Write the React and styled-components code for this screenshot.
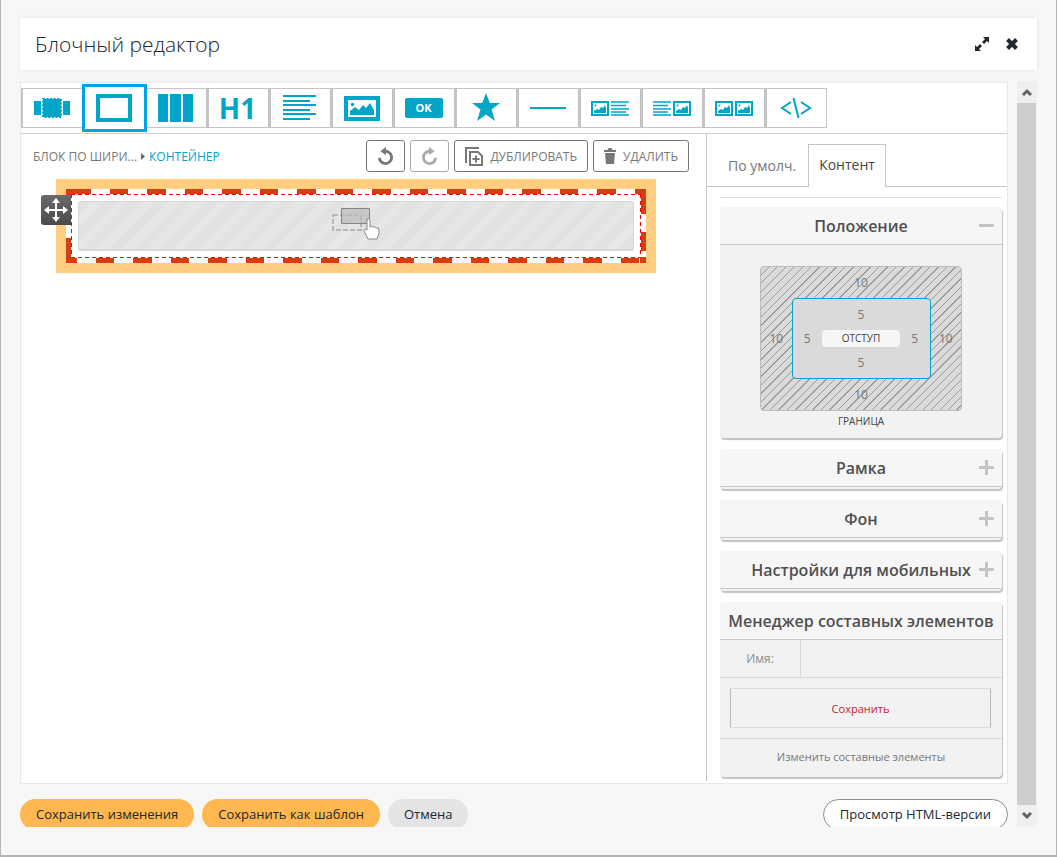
import React from "react";
import styled, { createGlobalStyle, css } from "styled-components";

const teal = "#00a5c8";

const GlobalStyle = createGlobalStyle`
  * {
    box-sizing: border-box;
  }
  body {
    margin: 0;
    font-family: "Open Sans", "Noto Sans", sans-serif;
    color: #23272e;
  }
  button,
  input {
    font-family: inherit;
    margin: 0;
    padding: 0;
  }
  button {
    cursor: pointer;
  }
  svg {
    display: block;
  }
`;

const Page = styled.div`
  display: flex;
  flex-direction: column;
  gap: 11px;
  min-height: 100vh;
  padding: 18px 19px 28px;
  background: #f7f7f7;
  border: solid #b4b4b4;
  border-width: 0 1px 2px;
`;

const Header = styled.header`
  display: flex;
  align-items: center;
  justify-content: space-between;
  height: 52px;
  padding: 0 17px 0 15px;
  background: #fff;
  box-shadow: 0 0 4px rgba(0, 0, 0, 0.08);
`;

const Title = styled.h1`
  margin: 0;
  font-size: 21px;
  font-weight: 300;
`;

const HeaderActions = styled.div`
  display: flex;
  gap: 14px;
`;

const IconButton = styled.button`
  display: flex;
  align-items: center;
  justify-content: center;
  width: 16px;
  height: 20px;
  color: #23272e;
  background: none;
  border: none;
`;

const Viewport = styled.div`
  display: flex;
  flex: 1;
  gap: 9px;
`;

const Content = styled.main`
  display: flex;
  flex: 1;
  flex-direction: column;
  min-width: 0;
`;

const ScrollBar = styled.div`
  display: flex;
  flex-direction: column;
  width: 20px;
  background: #efefef;
`;

const ScrollButton = styled.button`
  display: flex;
  align-items: center;
  justify-content: center;
  height: 22px;
  background: #efefef;
  border: none;
`;

const ScrollThumb = styled.div`
  flex: 1;
  margin-right: 1px;
  background: #cdcdcd;
`;

const Editor = styled.div`
  display: flex;
  flex: 1;
  flex-direction: column;
  background: #fff;
  border: 1px solid #e8e8e8;
  border-top: 2px solid #efefef;
`;

const Toolbar = styled.div`
  display: flex;
  padding: 5px 0;
  border-bottom: 1px solid #d0d0d0;
`;

const Tool = styled.button`
  position: relative;
  display: flex;
  align-items: center;
  justify-content: center;
  width: 62px;
  height: 40px;
  padding-right: 2px;
  color: ${teal};
  background: #fff;
  border: solid #c4c4c4;
  border-width: 1px 1px 1px 2px;
  ${(props) =>
    props.$selected &&
    css`
      z-index: 1;
      border-color: transparent;
      &::after {
        content: "";
        position: absolute;
        inset: -5px -3px;
        border: 3px solid #00a2e8;
      }
    `}
`;

const Heading = styled.span`
  font-size: 28px;
  font-weight: 700;
  line-height: 28px;
`;

const OkBadge = styled.span`
  width: 38px;
  border-radius: 2px;
  background: ${teal};
  color: #fff;
  font-size: 11px;
  font-weight: 700;
  line-height: 20px;
`;

const Workspace = styled.div`
  display: flex;
  flex: 1;
`;

const Canvas = styled.section`
  flex: 1;
  min-width: 0;
`;

const ActionBar = styled.div`
  display: flex;
  align-items: center;
  justify-content: space-between;
  padding: 6px 17px 7px 12px;
`;

const Breadcrumb = styled.nav`
  display: flex;
  align-items: center;
  gap: 4px;
  font-size: 12px;
  text-transform: uppercase;
`;

const Crumb = styled.a`
  color: ${(props) => (props.$current ? teal : "#777")};
  text-decoration: none;
`;

const Actions = styled.div`
  display: flex;
  gap: 5px;
`;

const Action = styled.button`
  display: flex;
  align-items: center;
  justify-content: center;
  gap: 7px;
  height: 32px;
  padding: 0 10px;
  color: #777;
  background: #fff;
  border: 1px solid #777;
  border-radius: 3px;
  font-size: 12px;
  text-transform: uppercase;
  &:disabled {
    color: #aaa;
    border-color: #aaa;
  }
`;

const Block = styled.div`
  position: relative;
  margin: 0 50px 0 35px;
  padding: 10px;
  background: #ffcd80;
`;

const MoveHandle = styled.button`
  position: absolute;
  top: 16px;
  left: -15px;
  display: flex;
  align-items: center;
  justify-content: center;
  width: 30px;
  height: 30px;
  background: linear-gradient(#6a6a6a, #4a4a4a);
  border: none;
  border-radius: 3px 0 0 3px;
`;

const dash = "#d13f12 0 19px, #fff 19px 38px, #d13f12 38px 56px, #fff 56px 75px";

const Band = styled.div`
  padding: 5px;
  background:
    linear-gradient(#d13f12, #d13f12) 0 0 / 6px 6px no-repeat,
    linear-gradient(#d13f12, #d13f12) 0 100% / 6px 25px no-repeat,
    linear-gradient(#d13f12, #d13f12) 100% 0 / 6px 25px no-repeat,
    linear-gradient(#d13f12, #d13f12) 100% 43px / 6px 19px no-repeat,
    linear-gradient(#d13f12, #d13f12) 100% 100% / 6px 6px no-repeat,
    linear-gradient(90deg, ${dash}) 6px 0 / 75px 6px repeat-x,
    linear-gradient(90deg, ${dash}) -8px 100% / 75px 6px repeat-x,
    #fff;
`;

const redDash = "#f00 0 4px, #fff 4px 7px";

const Outline = styled.div`
  padding: 7px;
  background:
    linear-gradient(90deg, ${redDash}) 0 0 / 7px 1px repeat-x,
    linear-gradient(90deg, ${redDash}) 0 100% / 7px 1px repeat-x,
    linear-gradient(${redDash}) 0 0 / 1px 7px repeat-y,
    linear-gradient(${redDash}) 100% 0 / 1px 7px repeat-y,
    linear-gradient(#fff, #fff) 1px 1px no-repeat;
`;

const DropZone = styled.div`
  display: flex;
  justify-content: center;
  height: 50px;
  padding-top: 5px;
  border: 1px solid #d8d8d8;
  border-width: 1px 1px 2px;
  border-radius: 3px;
  background: repeating-linear-gradient(
    135deg,
    #e2e2e2 0 9px,
    #e6e6e6 9px 18px
  );
`;

const Panel = styled.aside`
  width: 301px;
  margin-bottom: 2px;
  padding-bottom: 3px;
  border-left: 1px solid #c4c4c4;
`;

const Tabs = styled.div`
  display: flex;
  gap: 2px;
  height: 53px;
  padding-top: 10px;
  padding-left: 11px;
  border-bottom: 1px solid #c4c4c4;
`;

const Tab = styled.button`
  height: 43px;
  padding: 0 10px;
  color: #777;
  background: none;
  border: none;
  font-size: 14px;
  ${(props) =>
    props.$active &&
    css`
      padding-bottom: 3px;
      color: #444;
      background: #fff;
      border: 1px solid #c4c4c4;
      border-bottom: none;
    `}
`;

const Sections = styled.div`
  display: flex;
  flex-direction: column;
  gap: 11px;
  margin: 10px 5px 0 13px;
`;

const Rule = styled.hr`
  width: 100%;
  margin: 0 0 -2px;
  border: none;
  border-top: 1px solid #e0e0e0;
`;

const Card = styled.section`
  padding-bottom: 2px;
  background: #f2f2f2;
  border-radius: 4px;
  box-shadow: 1px 2px 1px #c2c2c2;
`;

const CardHeader = styled.button`
  position: relative;
  display: block;
  width: 100%;
  height: 38px;
  color: #505050;
  background: #f6f6f6;
  border: none;
  border-bottom: 1px solid #c8c8c8;
  border-radius: 4px 4px 0 0;
  font-size: 16px;
  font-weight: 600;
`;

const Toggle = styled.svg`
  position: absolute;
  top: 11px;
  right: 8px;
`;

const BoxModel = styled.div`
  padding: 21px 0 6px;
  text-align: center;
`;

const Margin = styled.div`
  display: grid;
  grid-template-columns: 1fr 139px 1fr;
  grid-template-rows: 31px 81px 31px;
  place-items: center;
  width: 202px;
  margin: 0 auto;
  border: 1px solid #bbb;
  border-radius: 4px;
  background: repeating-linear-gradient(
    135deg,
    #dadada 0 5px,
    #9c9c9c 5px 6px
  );
`;

const Padding = styled.div`
  display: grid;
  grid-row: 2;
  grid-column: 2;
  grid-template-columns: 1fr 78px 1fr;
  grid-template-rows: 31px 17px 31px;
  place-items: center;
  width: 139px;
  border: 1px solid ${teal};
  border-radius: 4px;
  background: #dadada;
`;

const Size = styled.input`
  grid-row: ${(props) => props.$row};
  grid-column: ${(props) => props.$col};
  width: 28px;
  height: 20px;
  color: #777;
  background: none;
  border: none;
  font-size: 12px;
  text-align: center;
`;

const PaddingLabel = styled.span`
  grid-row: 2;
  grid-column: 2;
  width: 100%;
  color: #444;
  background: #f6f6f6;
  border-radius: 4px;
  font-size: 10px;
  line-height: 17px;
`;

const MarginLabel = styled.div`
  margin-top: 2px;
  color: #444;
  font-size: 10px;
  line-height: 17px;
`;

const NameRow = styled.div`
  display: flex;
  height: 38px;
  border-bottom: 1px solid #d8d8d8;
`;

const NameLabel = styled.label`
  width: 81px;
  border-right: 1px solid #d8d8d8;
  color: #8c8c8c;
  font-size: 12px;
  line-height: 38px;
  text-align: center;
`;

const NameInput = styled.input`
  flex: 1;
  min-width: 0;
  padding: 0 10px;
  background: none;
  border: none;
`;

const SaveRow = styled.div`
  padding: 10px 11px 10px 10px;
  border-bottom: 1px solid #d8d8d8;
`;

const SaveElement = styled.button`
  display: block;
  width: 100%;
  height: 40px;
  color: #c01f2e;
  background: none;
  border: solid;
  border-color: #dcdcdc #b8b8b8;
  border-width: 1px;
  font-size: 11px;
`;

const EditLink = styled.a`
  display: block;
  color: #777;
  font-size: 11px;
  line-height: 36px;
  text-align: center;
  text-decoration: none;
`;

const Footer = styled.footer`
  display: flex;
  gap: 8px;
  height: 28px;
  margin-top: 15px;
  overflow: hidden;
`;

const Pill = styled.button`
  height: 31px;
  padding: 0 16px 2px;
  color: #23272e;
  background: ${(props) => props.$bg || "#ffb74f"};
  border: none;
  border-radius: 16px;
  font-size: 13px;
  white-space: nowrap;
  ${(props) =>
    props.$outline &&
    css`
      margin-left: auto;
      border: 1px solid #8e8e8e;
    `}
`;

const Picture = ({ x = 0, y = 0 }) => (
  <g transform={`translate(${x} ${y})`}>
    <path d="M1 1h16v13H1z" fill="none" stroke="currentColor" strokeWidth="2" />
    <path d="M3 12v-2l3-2 2 1 2-3 2 1 2-3 1 3v5z" fill="currentColor" />
    <circle cx="4.500" cy="4.500" r="1" fill="currentColor" />
  </g>
);

const Lines = ({ x = 0 }) => (
  <path
    d={`M${x} 1h18M${x} 4.500h15M${x} 8h18M${x} 11h15M${x} 14h18`}
    stroke="currentColor"
    strokeWidth="1.500"
  />
);

const WideBlockIcon = () => (
  <svg width="36" height="28" fill="currentColor">
    <path d="M0 7h7v14H0zM29 7h7v14h-7z" />
    <path
      d="M9 5h18v18H9z"
      stroke="currentColor"
      strokeWidth="2"
      strokeDasharray="2 1.600"
    />
  </svg>
);

const ContainerIcon = () => (
  <svg width="36" height="28" fill="none">
    <path d="M2 2h32v24H2z" stroke="currentColor" strokeWidth="4" />
  </svg>
);

const ColumnsIcon = () => (
  <svg width="36" height="28" fill="currentColor">
    <path d="M0 0h10v28H0zM12 0h11v28H12zM25 0h10v28H25z" />
  </svg>
);

const TextIcon = () => (
  <svg width="34" height="26" stroke="currentColor" strokeWidth="2">
    <path d="M0 1h33M0 6h27M0 10h33M0 15h27M0 19h33M0 24h27" />
  </svg>
);

const ImageIcon = () => (
  <svg width="36" height="25" fill="currentColor">
    <path d="M2 2h32v21H2z" fill="none" stroke="currentColor" strokeWidth="4" />
    <path d="M6 19v-4l5-4 4 3 4-5 3 3 4-5 4 7v5z" />
    <circle cx="8.500" cy="8.500" r="1.700" />
  </svg>
);

const StarIcon = () => (
  <svg width="30" height="30" viewBox="0 0 30 30" fill="currentColor">
    <path d="M15 0l3.800 10H29l-8.500 6.600L24 28l-9-6.500L6 28l3.500-11.400L1 10h10.200z" />
  </svg>
);

const DividerIcon = () => (
  <svg width="36" height="4">
    <path d="M0 2h36" stroke="currentColor" strokeWidth="2" />
  </svg>
);

const CodeIcon = () => (
  <svg width="32" height="22" fill="none" stroke="currentColor" strokeWidth="2">
    <path d="M11 5L2 11l9 6M21 5l9 6-9 6M13.500 1l5 20" />
  </svg>
);

const tools = [
  { label: "Блок по ширине", icon: <WideBlockIcon /> },
  { label: "Контейнер", icon: <ContainerIcon />, selected: true },
  { label: "Колонки", icon: <ColumnsIcon /> },
  { label: "Заголовок", icon: <Heading>H1</Heading> },
  { label: "Текст", icon: <TextIcon /> },
  { label: "Изображение", icon: <ImageIcon /> },
  { label: "Кнопка", icon: <OkBadge>OK</OkBadge> },
  { label: "Иконка", icon: <StarIcon /> },
  { label: "Разделитель", icon: <DividerIcon /> },
  {
    label: "Изображение и текст",
    icon: (
      <svg width="38" height="15">
        <Picture />
        <Lines x={20} />
      </svg>
    ),
  },
  {
    label: "Текст и изображение",
    icon: (
      <svg width="38" height="15">
        <Lines />
        <Picture x={20} />
      </svg>
    ),
  },
  {
    label: "Два изображения",
    icon: (
      <svg width="38" height="15">
        <Picture />
        <Picture x={20} />
      </svg>
    ),
  },
  { label: "HTML", icon: <CodeIcon /> },
];

const TurnIcon = ({ flip }) => (
  <svg width="17" height="19" viewBox="0 0 18 20">
    <g transform={flip ? "translate(18 0) scale(-1 1)" : undefined}>
      <path
        d="M2.500 11.500a6.500 6.500 0 1 0 6-7"
        fill="none"
        stroke="currentColor"
        strokeWidth="3"
      />
      <path d="M9.500 0v8.500L3.500 4.500z" fill="currentColor" />
    </g>
  </svg>
);

const DuplicateIcon = () => (
  <svg width="18" height="19" fill="none" stroke="currentColor" strokeWidth="2">
    <path d="M1 16V1h13" />
    <path d="M5 5h8l4 4v9H5z" />
    <path d="M11 8.500v7M7.500 12h7" />
  </svg>
);

const TrashIcon = () => (
  <svg width="12" height="16" fill="currentColor">
    <path d="M0 2h3.500l1-2h3l1 2H12v2H0zM1 5h10l-1 11H2z" />
  </svg>
);

const Section = ({ title, open, toggle = true, children }) => (
  <Card>
    <CardHeader type="button" aria-expanded={open || !toggle}>
      {title}
      {toggle && (
        <Toggle width="15" height="15" stroke="#c4c4c4" strokeWidth="3">
          <path d={open ? "M0 7.500h15" : "M0 7.500h15M7.500 0v15"} />
        </Toggle>
      )}
    </CardHeader>
    {children}
  </Card>
);

const App = () => {
  return (
    <>
      <GlobalStyle />
      <Page>
        <Header>
          <Title>Блочный редактор</Title>
          <HeaderActions>
            <IconButton type="button" aria-label="Развернуть">
              <svg width="14" height="14" fill="currentColor">
                <path d="M8 0h6v6l-2-2-3 3-2-2 3-3zM6 14H0V8l2 2 3-3 2 2-3 3z" />
              </svg>
            </IconButton>
            <IconButton type="button" aria-label="Закрыть">
              <svg width="12" height="12" stroke="currentColor" strokeWidth="4">
                <path d="M1.500 1.500l9 9M10.500 1.500l-9 9" />
              </svg>
            </IconButton>
          </HeaderActions>
        </Header>

        <Viewport>
          <Content>
            <Editor>
              <Toolbar>
                {tools.map((tool) => (
                  <Tool
                    key={tool.label}
                    type="button"
                    aria-label={tool.label}
                    $selected={tool.selected}
                  >
                    {tool.icon}
                  </Tool>
                ))}
              </Toolbar>

              <Workspace>
                <Canvas>
                  <ActionBar>
                    <Breadcrumb>
                      <Crumb href="#block">Блок по шири...</Crumb>
                      <svg width="4" height="7" fill="#666">
                        <path d="M0 0l4 3.500L0 7z" />
                      </svg>
                      <Crumb href="#container" $current>
                        Контейнер
                      </Crumb>
                    </Breadcrumb>
                    <Actions>
                      <Action type="button" aria-label="Отменить">
                        <TurnIcon />
                      </Action>
                      <Action type="button" aria-label="Повторить" disabled>
                        <TurnIcon flip />
                      </Action>
                      <Action type="button">
                        <DuplicateIcon />
                        Дублировать
                      </Action>
                      <Action type="button">
                        <TrashIcon />
                        Удалить
                      </Action>
                    </Actions>
                  </ActionBar>

                  <Block>
                    <Band>
                      <Outline>
                        <DropZone>
                          <svg width="48" height="34" fill="none">
                            <path
                              d="M1 8h28v15H1z"
                              stroke="#aaa"
                              strokeWidth="1.500"
                              strokeDasharray="5 2"
                            />
                            <path
                              d="M9.500 1.500h28v15h-28z"
                              fill="#bbb"
                              fillOpacity=".7"
                              stroke="#858585"
                            />
                            <path
                              d="M35 12q2-1 3 1v7q2-2 3 0 2-1 3 1 3-1 3 2v4l-2 5H36l-4-8q0-3 3-1z"
                              fill="#fff"
                              stroke="#858585"
                            />
                          </svg>
                        </DropZone>
                      </Outline>
                    </Band>
                    <MoveHandle type="button" aria-label="Переместить">
                      <svg width="24" height="24" fill="#fff">
                        <path d="M12 0l4 5h-3v6h6V8l5 4-5 4v-3h-6v6h3l-4 5-4-5h3v-6H5v3l-5-4 5-4v3h6V5H8z" />
                      </svg>
                    </MoveHandle>
                  </Block>
                </Canvas>

                <Panel>
                  <Tabs role="tablist">
                    <Tab type="button" role="tab">
                      По умолч.
                    </Tab>
                    <Tab type="button" role="tab" aria-selected $active>
                      Контент
                    </Tab>
                  </Tabs>
                  <Sections>
                    <Rule />
                    <Section title="Положение" open>
                      <BoxModel>
                        <Margin>
                          <Size aria-label="Граница сверху" defaultValue="10" $row={1} $col={2} />
                          <Size aria-label="Граница слева" defaultValue="10" $row={2} $col={1} />
                          <Padding>
                            <Size aria-label="Отступ сверху" defaultValue="5" $row={1} $col={2} />
                            <Size aria-label="Отступ слева" defaultValue="5" $row={2} $col={1} />
                            <PaddingLabel>ОТСТУП</PaddingLabel>
                            <Size aria-label="Отступ справа" defaultValue="5" $row={2} $col={3} />
                            <Size aria-label="Отступ снизу" defaultValue="5" $row={3} $col={2} />
                          </Padding>
                          <Size aria-label="Граница справа" defaultValue="10" $row={2} $col={3} />
                          <Size aria-label="Граница снизу" defaultValue="10" $row={3} $col={2} />
                        </Margin>
                        <MarginLabel>ГРАНИЦА</MarginLabel>
                      </BoxModel>
                    </Section>
                    <Section title="Рамка" />
                    <Section title="Фон" />
                    <Section title="Настройки для мобильных" />
                    <Section title="Менеджер составных элементов" toggle={false}>
                      <NameRow>
                        <NameLabel htmlFor="element-name">Имя:</NameLabel>
                        <NameInput id="element-name" type="text" />
                      </NameRow>
                      <SaveRow>
                        <SaveElement type="button">Сохранить</SaveElement>
                      </SaveRow>
                      <EditLink href="#elements">Изменить составные элементы</EditLink>
                    </Section>
                  </Sections>
                </Panel>
              </Workspace>
            </Editor>

            <Footer>
              <Pill type="button">Сохранить изменения</Pill>
              <Pill type="button">Сохранить как шаблон</Pill>
              <Pill type="button" $bg="#e2e4e6">
                Отмена
              </Pill>
              <Pill type="button" $bg="#fff" $outline>
                Просмотр HTML-версии
              </Pill>
            </Footer>
          </Content>

          <ScrollBar>
            <ScrollButton type="button" aria-label="Вверх">
              <svg width="10" height="8" fill="none" stroke="#606060" strokeWidth="3">
                <path d="M1 7l4-4 4 4" />
              </svg>
            </ScrollButton>
            <ScrollThumb />
            <ScrollButton type="button" aria-label="Вниз">
              <svg width="10" height="8" fill="none" stroke="#606060" strokeWidth="3">
                <path d="M1 1l4 4 4-4" />
              </svg>
            </ScrollButton>
          </ScrollBar>
        </Viewport>
      </Page>
    </>
  );
};

export default App;
